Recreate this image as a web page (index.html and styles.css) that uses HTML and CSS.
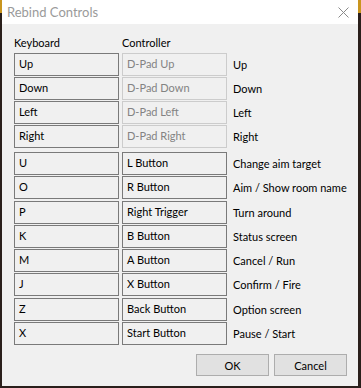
FILE: index.html
```html
<!DOCTYPE html>
<html lang="en">
<head>
    <meta charset="UTF-8">
    <meta name="viewport" content="width=device-width, initial-scale=1.0">
    <title>Rebind Controls</title>
    <link rel="stylesheet" href="styles.css">
</head>
<body>
    <div class="window">
        <div class="titlebar">
            <span class="title">Rebind Controls</span>
            <svg class="close" width="11" height="11" viewBox="0 0 11 11">
                <path d="M0.5 0.5 L10.5 10.5 M10.5 0.5 L0.5 10.5" stroke="#8a8a8a" stroke-width="1" fill="none"/>
            </svg>
        </div>

        <div class="content">
            <div class="head">
                <span>Keyboard</span>
                <span>Controller</span>
            </div>

            <!-- D-pad rows, controller side is fixed -->
            <div class="group">
                <div class="key">Up</div><div class="pad off">D-Pad Up</div><div class="label">Up</div>
                <div class="key">Down</div><div class="pad off">D-Pad Down</div><div class="label">Down</div>
                <div class="key">Left</div><div class="pad off">D-Pad Left</div><div class="label">Left</div>
                <div class="key">Right</div><div class="pad off">D-Pad Right</div><div class="label">Right</div>
            </div>

            <div class="group second">
                <div class="key">U</div><div class="pad">L Button</div><div class="label">Change aim target</div>
                <div class="key">O</div><div class="pad">R Button</div><div class="label">Aim / Show room name</div>
                <div class="key">P</div><div class="pad">Right Trigger</div><div class="label">Turn around</div>
                <div class="key">K</div><div class="pad">B Button</div><div class="label">Status screen</div>
                <div class="key">M</div><div class="pad">A Button</div><div class="label">Cancel / Run</div>
                <div class="key">J</div><div class="pad">X Button</div><div class="label">Confirm / Fire</div>
                <div class="key">Z</div><div class="pad">Back Button</div><div class="label">Option screen</div>
                <div class="key">X</div><div class="pad">Start Button</div><div class="label">Pause / Start</div>
            </div>

            <div class="buttons">
                <button>OK</button>
                <button>Cancel</button>
            </div>
        </div>
    </div>
</body>
</html>
```

FILE: styles.css
```css
/* Dialog styles */
body {
    margin: 0;
    height: 388px;
    overflow: hidden;
    background: linear-gradient(#c9951e 0, #c9951e 13px, #2a1f1b 13px);
    font-family: Lato, "Noto Sans", sans-serif;
    font-size: 11px;
    color: #000;
}

.window {
    margin-left: 2px;
    width: 356px;
    height: 386px;
    background: #f0f0f0;
    display: flex;
    flex-direction: column;
}

.titlebar {
    height: 24px;
    background: #fff;
    display: flex;
    align-items: center;
    justify-content: space-between;
    padding: 0 9px 0 5px;
}

.title {
    font-size: 13px;
    color: #9a9a9a;
}

.close {
    margin-top: 1px;
}

.content {
    padding: 12px 11px 0 12px;
}

.head,
.group {
    display: grid;
    grid-template-columns: 105px 105px 1fr;
    column-gap: 3px;
}

.head {
    height: 14px;
    line-height: 14px;
    margin-bottom: 3px;
}

.group {
    grid-auto-rows: 23px;
    row-gap: 1px;
}

.group.second {
    margin-top: 4px;
    row-gap: 1.3px;
}

.key,
.pad {
    border: 1px solid #7a7a7a;
    padding-left: 4px;
    line-height: 19px;
    white-space: nowrap;
}

.pad.off {
    border-color: #cccccc;
    color: #838383;
}

.label {
    padding-left: 3px;
    display: flex;
    align-items: center;
    white-space: nowrap;
}

.buttons {
    display: flex;
    justify-content: flex-end;
    gap: 5px;
    margin-top: 9px;
}

button {
    width: 73px;
    height: 22px;
    padding: 0;
    border: 1px solid #adadad;
    background: #e1e1e1;
    font-family: inherit;
    font-size: 11px;
    color: #000;
}
```
